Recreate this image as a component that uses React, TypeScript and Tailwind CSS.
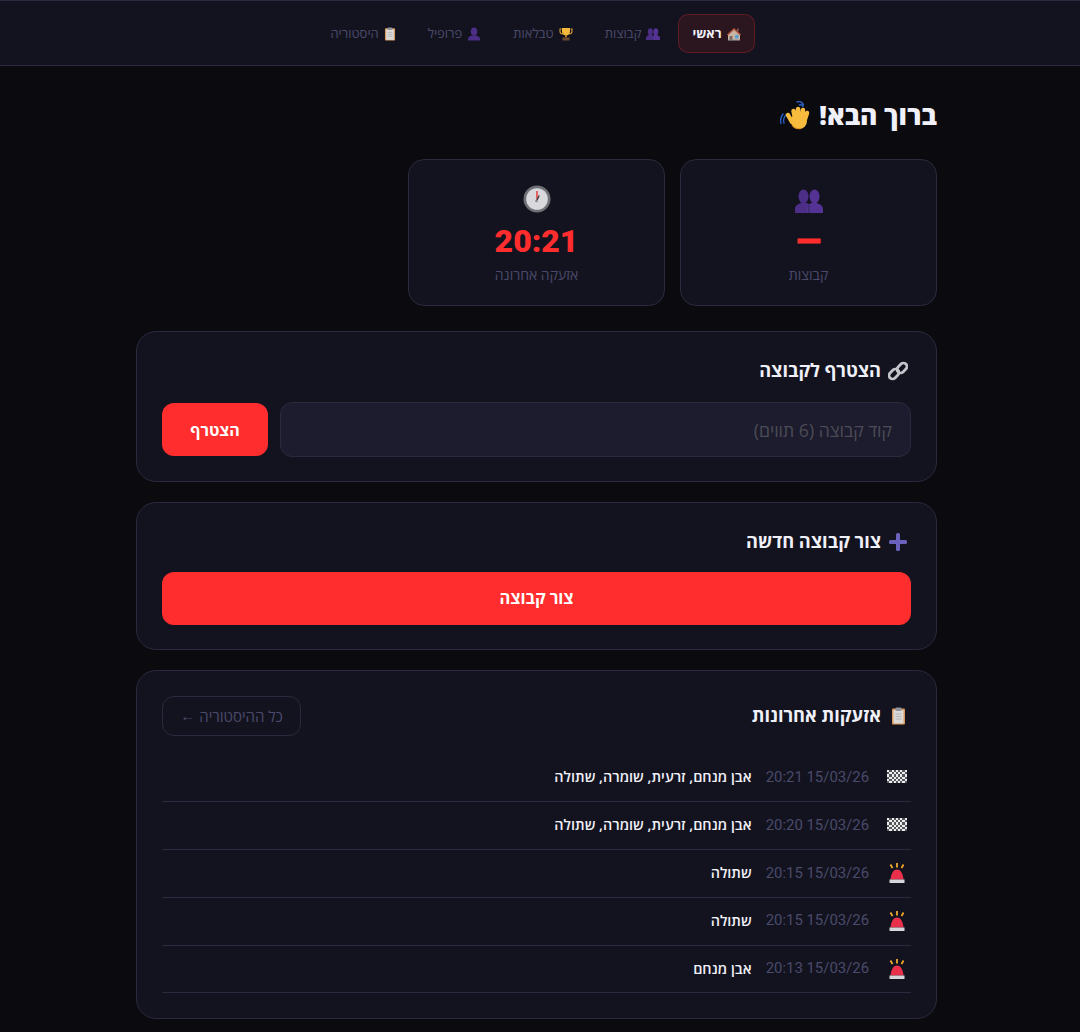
function HouseIcon() {
  return (
    <svg viewBox="0 0 14 14" className="h-[14px] w-[14px] shrink-0">
      <path d="M1 13V7.500L7 2l6 5.500V13z" fill="#c9b7a6" />
      <path d="M0 7.500 7 1l7 6.500-1 1L7 3 1 8.500z" fill="#b5563f" />
      <rect x="10" y="1.500" width="1.600" height="3" fill="#8a5a48" />
      <rect x="2.500" y="9" width="3" height="4" fill="#7c6a60" />
      <circle cx="9.800" cy="9.800" r="2" fill="#5a9fd0" />
      <rect x="1" y="12.600" width="12" height="1" fill="#8d8d96" />
    </svg>
  );
}

function BustsIcon({ className }: { className: string }) {
  return (
    <svg viewBox="0 0 28 24" className={className}>
      <g fill="#4c2e87">
        <ellipse cx="8.500" cy="7.500" rx="5" ry="7" />
        <path d="M0 24v-4c0-4 4-5 6-6h6c2 1 4 2 4 6v4z" />
      </g>
      <g fill="#553394">
        <ellipse cx="19.500" cy="7.500" rx="5" ry="7" />
        <path d="M12 24v-4c0-4 3-5 4-6h6c2 1 6 2 6 6v4z" />
      </g>
      <path d="M14 16l0 8" stroke="#2f2a5a" strokeWidth="1" />
    </svg>
  );
}

function TrophyIcon() {
  return (
    <svg viewBox="0 0 14 14" className="h-[14px] w-[14px] shrink-0">
      <path d="M2.500 2H1v2.500C1 6 2.400 7 4 7M11.500 2H13v2.500C13 6 11.600 7 10 7" fill="none" stroke="#e0a030" strokeWidth="1.100" />
      <path d="M3 1h8v3.500C11 7 9 8.500 7 8.500S3 7 3 4.500z" fill="#f4b83a" />
      <rect x="6.200" y="8" width="1.600" height="2.500" fill="#c98b2a" />
      <rect x="3.500" y="10.500" width="7" height="3" fill="#6b4a32" />
    </svg>
  );
}

function PersonIcon() {
  return (
    <svg viewBox="0 0 14 14" className="h-[14px] w-[14px] shrink-0">
      <g fill="#4c2e87">
        <ellipse cx="7" cy="4.500" rx="3.200" ry="4" />
        <path d="M1 13.500v-1.500c0-2 2-3 4-3.500h4c2 .5 4 1.500 4 3.500v1.500z" />
      </g>
    </svg>
  );
}

function ClipboardIcon({ className }: { className: string }) {
  return (
    <svg viewBox="0 0 14 18" className={className}>
      <rect x="0.500" y="1.500" width="13" height="16" rx="1" fill="#d8975a" />
      <rect x="2" y="3" width="10" height="13.500" fill="#dcdad6" />
      <rect x="4" y="0.500" width="6" height="3.500" rx="1" fill="#8d929c" />
      <g stroke="#a4a6ac" strokeWidth="0.800">
        <path d="M4 7h6M4 9.500h6M4 12h6" />
      </g>
    </svg>
  );
}

function WaveIcon() {
  return (
    <svg viewBox="0 0 30 30" className="-mt-[2px] h-[30px] w-[30px] shrink-0">
      <g fill="none" stroke="#2a5fc0" strokeWidth="1.400" strokeLinecap="round">
        <path d="M6 15c-2 2-3 5-2 8M3 14c-2 2.500-3 6-2 9.500" />
        <path d="M17 2c2.500-1 5.500 0 6.500 3M19.500 5c1.500-.5 3 0 3.500 1.500" />
      </g>
      <g stroke="#f7bb3e" strokeWidth="4.500" strokeLinecap="round">
        <path d="M15 18 13.500 11M18.500 17 18 9M22 17 23 10M25 19 27 13M12 22 8 15" />
      </g>
      <ellipse cx="19" cy="21" rx="8" ry="8" fill="#f7bb3e" />
      <path d="M12 25c2 3 6 4 9 3.500" fill="none" stroke="#e0901f" strokeWidth="1.200" />
    </svg>
  );
}

function ClockIcon() {
  return (
    <svg viewBox="0 0 28 28" className="h-[28px] w-[28px]">
      <circle cx="14" cy="14" r="13.500" fill="#6f7177" />
      <circle cx="14" cy="14" r="10.800" fill="#d9d8dc" />
      <path d="M14 14.500 14 6" stroke="#e5322d" strokeWidth="1.400" />
      <path d="M14 15l2.200-4.500" stroke="#3a3a40" strokeWidth="1.400" />
      <circle cx="13.500" cy="16" r="1.300" fill="#85858c" />
    </svg>
  );
}

function LinkIcon() {
  return (
    <svg viewBox="0 0 20 20" className="h-[20px] w-[20px]">
      <g fill="none" stroke="#c4c5cb" strokeWidth="2.800">
        <rect x="10.500" y="1.500" width="7" height="11" rx="3.500" transform="rotate(45 14 7)" />
        <rect x="2.500" y="7.500" width="7" height="11" rx="3.500" transform="rotate(45 6 13)" />
      </g>
    </svg>
  );
}

function PlusIcon() {
  return (
    <svg viewBox="0 0 18 18" className="h-[18px] w-[18px]">
      <rect x="7" y="0" width="4" height="18" rx="1.500" fill="#6a62bd" />
      <rect x="0" y="7" width="18" height="4" rx="1.500" fill="#6a62bd" />
    </svg>
  );
}

function CheckerIcon() {
  const cells = [];
  for (let y = 0; y < 6; y++) {
    for (let x = 0; x < 9; x++) {
      if ((x + y) % 2 === 0) cells.push(<rect key={`${x}-${y}`} x={x} y={y} width="1" height="1" fill="#ececec" />);
    }
  }
  return (
    <svg viewBox="0 0 9 6" shapeRendering="crispEdges" className="h-[13px] w-[20px]">
      <rect width="9" height="6" fill="#55555c" />
      {cells}
    </svg>
  );
}

function SirenIcon() {
  return (
    <svg viewBox="0 0 16 20" className="h-[20px] w-[16px]">
      <path d="M8 0v4.500M1.500 1.500l2 3.500M14.500 1.500l-2 3.500" stroke="#f0a92e" strokeWidth="1.800" />
      <path d="M1.500 16.500C2 11 4 6.500 8 6.500S14 11 14.500 16.500z" fill="#e8304a" />
      <rect x="0.500" y="16.500" width="15" height="3.500" fill="#d5d5da" />
    </svg>
  );
}

const tabs = [
  { icon: <HouseIcon />, label: "ראשי", active: true },
  { icon: <BustsIcon className="h-[12px] w-[14px] shrink-0" />, label: "קבוצות" },
  { icon: <TrophyIcon />, label: "טבלאות" },
  { icon: <PersonIcon />, label: "פרופיל" },
  { icon: <ClipboardIcon className="h-[14px] w-[12px] shrink-0" />, label: "היסטוריה" },
];

const alerts = [
  { icon: <CheckerIcon />, time: "15/03/26 20:21", places: "אבן מנחם, זרעית, שומרה, שתולה" },
  { icon: <CheckerIcon />, time: "15/03/26 20:20", places: "אבן מנחם, זרעית, שומרה, שתולה" },
  { icon: <SirenIcon />, time: "15/03/26 20:15", places: "שתולה" },
  { icon: <SirenIcon />, time: "15/03/26 20:15", places: "שתולה" },
  { icon: <SirenIcon />, time: "15/03/26 20:13", places: "אבן מנחם" },
];

function StatCard({ icon, value, label, valueClass }: { icon: React.ReactNode; value: string; label: string; valueClass?: string }) {
  return (
    <div className="flex h-[147px] flex-col items-center rounded-2xl border border-[#2a2a3e] bg-[#13131f] pt-[25px]">
      <div className="flex h-[28px] items-end">{icon}</div>
      <div className="mt-[6px] flex h-[44px] items-center font-['Roboto'] text-[32px] font-black text-[#ff2d2d]">
        <span className={`leading-[20px] ${valueClass ?? ""}`}>{value}</span>
      </div>
      <div className="mt-[2px] text-[14px] leading-[20px] text-[#4a4a6a]">{label}</div>
    </div>
  );
}

function CardTitle({ icon, title }: { icon: React.ReactNode; title: string }) {
  return (
    <h2 className="flex h-[28px] items-center gap-[4px] text-[18.2px] font-bold">
      <span className="flex w-[26px] justify-center">{icon}</span>
      {title}
    </h2>
  );
}

export default function App() {
  return (
    <div dir="rtl" className="min-h-[1032px] bg-[#0a0a0f] font-['Open_Sans',sans-serif] text-[#f0f0f8]">
      <nav className="flex h-[66px] items-center justify-center gap-1 border-y border-[#2a2a3e] bg-[#13131f] pt-[1px] pr-[9px]">
        {tabs.map((tab) => (
          <a
            key={tab.label}
            className={
              tab.active
                ? "flex h-[39.5px] items-center gap-[5px] rounded-[10px] border border-[#ff2d2d]/25 bg-[#ff2d2d]/10 px-[13px] text-[13px] font-bold text-[#f0f0f8]"
                : "flex h-[39.5px] items-center gap-[5px] rounded-[10px] border border-transparent px-[13px] text-[13px] font-medium text-[#4a4a6a]"
            }
          >
            {tab.icon}
            <span>{tab.label}</span>
          </a>
        ))}
      </nav>

      <div className="pr-[7px]">
        <main className="mx-auto w-[801px] pt-[32px]">
          <h1 className="flex h-[36px] items-center gap-[9px] text-[26.4px] font-extrabold">
            ברוך הבא!
            <WaveIcon />
          </h1>

          <div className="mt-[25px] grid grid-cols-3 gap-[15px]">
            <StatCard icon={<BustsIcon className="h-[24px] w-[28px]" />} value="—" label="קבוצות" valueClass="[-webkit-text-stroke:1px_#ff2d2d]" />
            <StatCard icon={<ClockIcon />} value="20:21" label="אזעקה אחרונה" />
          </div>

          <section className="mt-[25px] h-[151px] rounded-[20px] border border-[#2a2a3e] bg-[#13131f] px-[25px] pt-[25px]">
            <CardTitle icon={<LinkIcon />} title="הצטרף לקבוצה" />
            <div className="mt-[17px] flex items-center gap-3">
              <input
                readOnly
                placeholder="קוד קבוצה (6 תווים)"
                className="h-[55px] flex-1 rounded-xl border border-[#2a2a3e] bg-[#1c1c2e] px-[18px] text-[17.6px] outline-none placeholder:text-[#4d4b55]"
              />
              <button className="h-[53px] w-[106px] rounded-xl bg-[#ff2d2d] text-[16px] font-bold text-white">הצטרף</button>
            </div>
          </section>

          <section className="mt-[20px] h-[148px] rounded-[20px] border border-[#2a2a3e] bg-[#13131f] px-[25px] pt-[25px]">
            <CardTitle icon={<PlusIcon />} title="צור קבוצה חדשה" />
            <button className="mt-[16px] h-[53px] w-full rounded-xl bg-[#ff2d2d] text-[16.4px] font-bold text-white">צור קבוצה</button>
          </section>

          <section className="mt-[20px] h-[349px] rounded-[20px] border border-[#2a2a3e] bg-[#13131f] px-[25px] pt-[25px]">
            <div className="flex h-[40px] items-center justify-between">
              <CardTitle icon={<ClipboardIcon className="h-[18px] w-[15px]" />} title="אזעקות אחרונות" />
              <a className="flex h-[40px] w-[139px] items-center justify-center gap-[4px] rounded-xl border border-[#2a2a3e] text-[15px] text-[#4a4a6a]">
                כל ההיסטוריה
                <span className="font-['Liberation_Sans']">←</span>
              </a>
            </div>
            <ul className="mt-[18px]">
              {alerts.map((alert, i) => (
                <li key={i} className="flex h-[47.9px] items-center border-b border-[#2a2a3e] pb-[1px]">
                  <span className="flex w-[28px] justify-center">{alert.icon}</span>
                  <span className="mr-[14px] font-['Roboto'] text-[14.9px] text-[#4a4a6a]">{alert.time}</span>
                  <span className="mr-[14px] text-[14.4px] font-semibold">{alert.places}</span>
                </li>
              ))}
            </ul>
          </section>
        </main>
      </div>
    </div>
  );
}
